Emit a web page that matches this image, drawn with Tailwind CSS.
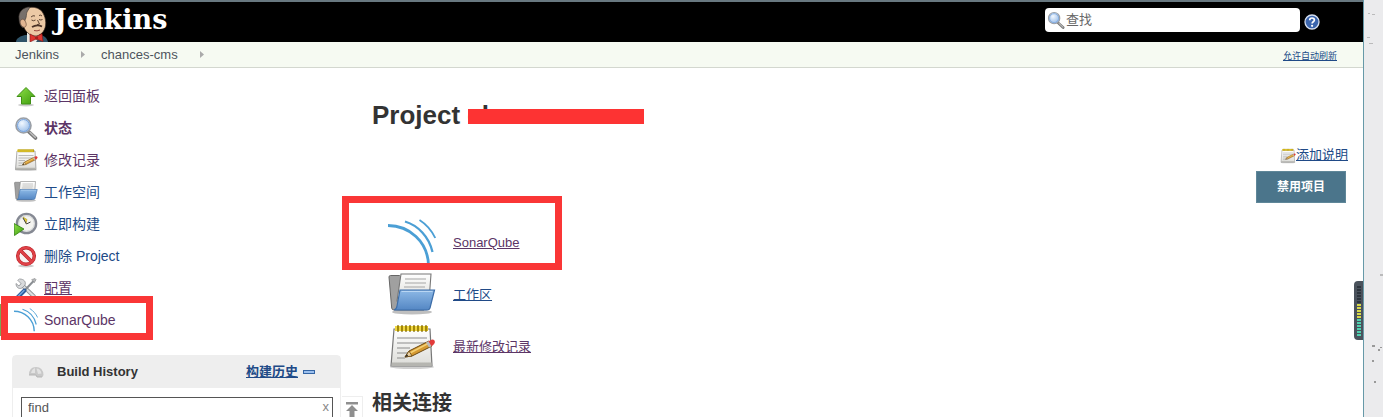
<!DOCTYPE html>
<html lang="zh-CN">

<head>
    <meta charset="UTF-8">
    <meta name="viewport" content="width=device-width, initial-scale=1.0">
    <script src="https://cdn.jsdelivr.net/npm/@tailwindcss/browser@4"></script>
    <title>chances-cms [Jenkins]</title>
</head>

<body class="flex h-screen overflow-hidden bg-white font-['Liberation_Sans','Noto_Sans_CJK_SC',sans-serif] text-[13px] text-[#333]">

    <!-- shared icons -->
    <svg class="absolute size-0" aria-hidden="true">
        <defs>
            <linearGradient id="gBlue" x1="0" y1="0" x2="0" y2="1">
                <stop offset="0" stop-color="#8db9e6" />
                <stop offset="1" stop-color="#5487c4" />
            </linearGradient>
            <linearGradient id="gPaper" x1="0" y1="0" x2="0" y2="1">
                <stop offset="0" stop-color="#ffffff" />
                <stop offset="1" stop-color="#dcdcd8" />
            </linearGradient>
            <linearGradient id="gGreen" x1="0" y1="0" x2="1" y2="1">
                <stop offset="0" stop-color="#8fe04a" />
                <stop offset="1" stop-color="#3d9c0c" />
            </linearGradient>
            <radialGradient id="gLens" cx=".4" cy=".35" r=".7">
                <stop offset="0" stop-color="#f2f8ff" />
                <stop offset="1" stop-color="#8fb6e6" />
            </radialGradient>
        </defs>
        <symbol id="search" viewBox="0 0 24 24">
            <path d="M14.500 15.500l7 6.500" stroke="#777" stroke-width="3.6" stroke-linecap="round" />
            <path d="M16 16.400l5.300 5" stroke="#bbb" stroke-width="1.5" stroke-linecap="round" />
            <circle cx="9.5" cy="9.5" r="7.5" fill="url(#gLens)" stroke="#9a9fa6" stroke-width="1.6" />
            <circle cx="9.5" cy="9.5" r="6" fill="none" stroke="#7aa5dd" stroke-width="1" />
        </symbol>
        <symbol id="notepad" viewBox="0 0 48 48">
            <ellipse cx="24" cy="44" rx="22" ry="2" fill="#000" opacity=".18" />
            <path d="M6 6h36l2 37H3z" fill="url(#gPaper)" stroke="#777" stroke-width="1.2" />
            <path d="M4 39.500h39.500l.3 3.500H3.300z" fill="#b5b5b0" />
            <path d="M9 15h30M9 20h30M9 25h13M9 30h16M9 35h8" stroke="#8b8b8b" stroke-width="1.1" />
            <path d="M7 3h33v5H7z" fill="#d9b91c" />
            <path d="M10 2v7M14 2v7M18 2v7M22 2v7M26 2v7M30 2v7M34 2v7M38 2v7" stroke="#7d6800" stroke-width="1.2" />
            <path d="M8 3v5M12 3v5M16 3v5M20 3v5M24 3v5M28 3v5M32 3v5M36 3v5" stroke="#f5df4a" stroke-width="1.6" />
            <path d="M17 34l4-6 20-10 3 5-20 10z" fill="#d69a32" stroke="#6c4912" stroke-width="1" />
            <path d="M22 30l19-10" stroke="#f3cf74" stroke-width="1.5" />
            <path d="M17 34l4-6 3 5z" fill="#e9cfa0" stroke="#6c4912" stroke-width=".8" />
            <path d="M17 34l2-2.800 1.200 1.800z" fill="#222" />
            <path d="M38 19.500l3-1.500 3 5-3 1.500z" fill="#bbb" />
            <path d="M40.500 18.200l3-1.500q3-.7 3.500 2.300 0 2-3.500 4.300z" fill="#e23a3a" />
        </symbol>
        <symbol id="folder" viewBox="0 0 48 48">
            <ellipse cx="24" cy="41" rx="20" ry="2.5" fill="#000" opacity=".25" />
            <path d="M1 6q0-1.500 1.500-1.500h9L14 7h22v32H6q-2 0-2.300-2z" fill="#a0a0a0" stroke="#666" stroke-width="1" />
            <path d="M13 3h30l-2 27H9z" fill="url(#gPaper)" stroke="#777" stroke-width="1.1" />
            <path d="M17 8h21M17 12h21M16 16h21" stroke="#a5a5a5" stroke-width="1.2" />
            <path d="M12 19h34.500L42 37q-.6 2-3 2H6q2.500-.5 3-4z" fill="url(#gBlue)" stroke="#3c6da8" stroke-width="1.2" />
            <path d="M13.500 20.500h31" stroke="#b9d6f3" stroke-width="1" />
        </symbol>
        <symbol id="sonar" viewBox="0 0 48 48">
            <g fill="none" stroke="#4b9fd5">
                <path d="M0 6.500c21 0 40 16 40.500 40" stroke-width="2.8" />
                <path d="M17 2.500c13 4 24 15 27.500 30.500" stroke-width="2.3" />
                <path d="M31.500 1c7 4.500 12.500 11 15.700 18" stroke-width="1.8" />
            </g>
        </symbol>
    </svg>

    <div class="relative flex min-w-0 flex-1 flex-col border-r border-[#6699a8]">

        <header class="flex h-[42px] shrink-0 items-center border-t-2 border-[#687880] bg-black pr-[43px] pl-4">
            <a href="#" class="flex h-full items-end gap-1.5">
                <svg class="h-9 w-8" viewBox="0 0 32 36" aria-hidden="true">
                    <path d="M0 36c0-4 5-6 9-7h14c5 0 8 3 9 7z" fill="#2f5368" />
                    <path d="M11 26l9-1 4 5-4 6h-9z" fill="#e9e9e4" />
                    <path d="M7 5C12-1 25 0 28 9c3 7 2 14-2 18-4 4-10 4-14 0-4-3-8-12-5-22z" fill="#ecc9a5" stroke="#3b2a20" stroke-width=".7" />
                    <path d="M14 1C7 1 2 6 3 13c0 4 2 8 4 9l2-8c2-3 1-6 2-8z" fill="#77706b" stroke="#3b332e" stroke-width=".6" />
                    <path d="M5 14c2-2 4 0 5 3s-1 5-3 4-4-5-2-7z" fill="#e0b592" stroke="#5a4030" stroke-width=".6" />
                    <path d="M15 11q2-2 4-1M23 9.500q2-1 3 .5M15.500 14q2 1.500 4 0M23 13.500q2 1 3.500 0M21.500 14l2 4-2.500.8" fill="none" stroke="#4d3426" stroke-width=".9" />
                    <path d="M16 21q5-3 10-.5" fill="none" stroke="#4a3228" stroke-width="1.8" />
                    <path d="M18 24.500q3 1 6-.5" fill="none" stroke="#9d4a3e" stroke-width="1" />
                    <path d="M14 28l6 3 6-3.500 1 8-7-2.500-6 3z" fill="#e0352f" stroke="#7a1512" stroke-width=".6" />
                    <circle cx="20.5" cy="32" r="1.7" fill="#a81f1c" />
                </svg>
                <span class="self-center pb-1 font-['DejaVu_Serif',serif] text-[27px] leading-8 font-bold text-white">Jenkins</span>
            </a>
            <form class="ml-auto flex items-center gap-1 pb-1">
                <label class="flex h-6 w-[255px] items-center gap-px rounded-sm bg-white pl-0.5">
                    <svg class="size-[18px]"><use href="#search" /></svg>
                    <input type="search" aria-label="查找" placeholder="查找" class="min-w-0 flex-1 outline-none placeholder:text-[#666]">
                </label>
                <a href="#" aria-label="帮助">
                    <svg class="mt-1 size-4" viewBox="0 0 16 16">
                        <circle cx="8" cy="8" r="7" fill="#3b65ad" stroke="#d5dff0" stroke-width="1.3" />
                        <path d="M5.700 6.300c0-3 4.700-3 4.700-.2 0 1.700-2.300 1.700-2.300 3.500" fill="none" stroke="#fff" stroke-width="1.7" />
                        <circle cx="8.1" cy="11.8" r="1.1" fill="#fff" />
                    </svg>
                </a>
            </form>
        </header>

        <nav class="flex h-[26px] shrink-0 items-center border-b border-[#d3d7cf] bg-[#f6faf2] pr-[26px] pl-[15px] text-[#4d545d]">
            <a href="#">Jenkins</a>
            <svg class="mr-4 ml-[22px] h-[7px] w-1" viewBox="0 0 4 7"><path d="M0 0l4 3.500L0 7z" fill="#aaa" /></svg>
            <a href="#">chances-cms</a>
            <svg class="ml-[22px] h-[7px] w-1" viewBox="0 0 4 7"><path d="M0 0l4 3.500L0 7z" fill="#aaa" /></svg>
            <a href="#" class="mt-1 ml-auto text-[9px] text-[#204a87] underline">允许自动刷新</a>
        </nav>

        <div class="flex">

            <!-- side panel -->
            <aside class="w-[342px] shrink-0 pt-3">
                <ul class="text-sm text-[#5c3566]">
                    <li><a href="#" class="flex h-8 items-center gap-1.5 pl-3.5">
                        <svg class="size-6" viewBox="0 0 24 24">
                            <ellipse cx="12" cy="21" rx="8" ry="1.5" fill="#000" opacity=".2" />
                            <path d="M12 3.500l9 9h-4.500V20h-9v-7.500H3z" fill="url(#gGreen)" stroke="#3f8f14" stroke-width="1" stroke-linejoin="round" />
                        </svg>返回面板</a></li>
                    <li><a href="#" class="flex h-8 items-center gap-1.5 pl-3.5 font-bold">
                        <svg class="size-6"><use href="#search" /></svg>状态</a></li>
                    <li><a href="#" class="flex h-8 items-center gap-1.5 pl-3.5">
                        <svg class="size-6"><use href="#notepad" /></svg>修改记录</a></li>
                    <li><a href="#" class="flex h-8 items-center gap-1.5 pl-3.5 text-[#204a87]">
                        <svg class="size-6"><use href="#folder" /></svg>工作空间</a></li>
                    <li><a href="#" class="flex h-8 items-center gap-1.5 pl-3.5 text-[#204a87]">
                        <svg class="size-6" viewBox="0 0 24 24">
                            <circle cx="12.5" cy="11.5" r="9.6" fill="#f4f4f0" stroke="#858993" stroke-width="2.4" />
                            <circle cx="12.5" cy="11.5" r="7.8" fill="none" stroke="#c3c7cc" stroke-width=".7" />
                            <path d="M9 5l4 2.500-1 4z" fill="#e5cf35" stroke="#a08c10" stroke-width=".5" />
                            <path d="M12.500 12l-3.500-6M12.500 12l4-2" stroke="#444" stroke-width="1" />
                            <path d="M0 11.500l10 5.500L.5 23.500z" fill="url(#gGreen)" stroke="#2f7d10" stroke-width=".8" />
                        </svg>立即构建</a></li>
                    <li><a href="#" class="flex h-8 items-center gap-1.5 pl-3.5 text-[#204a87]">
                        <svg class="size-6" viewBox="0 0 24 24">
                            <ellipse cx="12" cy="22" rx="8" ry="1.5" fill="#000" opacity=".2" />
                            <circle cx="12" cy="12" r="8.3" fill="#f7f3f3" stroke="#b81f24" stroke-width="3.4" />
                            <path d="M6.500 6.500l11 11" stroke="#b81f24" stroke-width="3.4" />
                            <circle cx="12" cy="12" r="8.3" fill="none" stroke="#df4248" stroke-width="2.2" />
                            <path d="M6.500 6.500l11 11" stroke="#df4248" stroke-width="2.2" />
                        </svg>删除 Project</a></li>
                    <li><a href="#" class="flex h-8 items-center gap-1.5 pl-3.5">
                        <svg class="size-6" viewBox="0 0 24 24" fill="none" stroke-linecap="round">
                            <path d="M8 9l12 11.500" stroke="#8f9296" stroke-width="4" />
                            <path d="M8 9l12 11.500" stroke="#dcdedf" stroke-width="2.4" />
                            <path d="M4 4.500l3 3-2 2.500-3-2.500c0 4 3 6 6 4.500l3-3c1.300-3-1-6-5-6z" fill="#d8dadc" stroke="#8f9296" stroke-width=".8" />
                            <path d="M20.500 4L11 14" stroke="#8b8f94" stroke-width="2" />
                            <path d="M18 3.500l3-1 1 1-1.500 3z" fill="#b5b8bb" stroke="#888" stroke-width=".6" />
                            <path d="M10.500 14.500L4 21" stroke="#2e5d9c" stroke-width="4" />
                            <path d="M10 14.500l-6 6" stroke="#76a8dd" stroke-width="1.4" />
                        </svg><span class="underline">配置</span></a></li>
                    <li class="relative border-l-2 border-[#7ea352]"><a href="#" class="flex h-8 items-center gap-1.5 pl-3">
                        <svg class="size-6"><use href="#sonar" /></svg>SonarQube</a>
                        <div class="absolute -top-2 -left-px h-11 w-[152px] border-7 border-[#fa3636]"></div>
                    </li>
                </ul>

                <section class="mt-[19px] mr-px ml-3 rounded-t border border-[#eee]">
                    <div class="flex h-8 items-center bg-[#eee] pr-[25px] pl-[15px] font-bold">
                        <svg class="mr-[13px] size-4" viewBox="0 0 16 16" aria-hidden="true">
                            <path d="M1 11q0-8 7-8t7.500 8l-1 2H9l-1-2z" fill="#c8c8c8" />
                            <path d="M3 9q1-4 4-5v5zM8.500 4.500q4 0 5 5L10 10z" fill="#e2e2e2" />
                            <path d="M1 11h7l1 2h5" fill="none" stroke="#b5b5b5" />
                        </svg>
                        <h2>Build History</h2>
                        <a href="#" class="ml-auto text-[#204a87] underline">构建历史</a>
                        <button type="button" aria-label="collapse" class="ml-[5px] h-1 w-3 border border-[#3465a4] bg-[#9cc0ee]"></button>
                    </div>
                    <div class="relative mt-[9px] mr-[7px] ml-2">
                        <input type="text" value="find" aria-label="find" class="h-6 w-full border border-[#555] px-1.5 pb-1 text-[#555] outline-none">
                        <button type="button" aria-label="clear" class="absolute top-0.5 right-1 leading-4 text-[#888]">x</button>
                    </div>
                </section>
            </aside>

            <!-- scroll-to-top handle -->
            <button type="button" aria-label="top" class="mt-[328px] flex h-8 w-[21px] shrink-0 justify-center border-t border-r border-[#eee] pt-[5px]">
                <svg class="h-[15px] w-3" viewBox="0 0 12 15">
                    <path d="M0 0h12v2.500H0zM6 3l6 6H8.500v6h-5V9H0z" fill="#8f8f8f" />
                </svg>
            </button>

            <main class="min-w-0 flex-1 pt-[31px] pr-[15px] pl-[9px]">
                <h1 class="relative text-[26px] leading-8 font-bold">Project chances-cms
                    <span class="absolute top-2.5 left-24 h-[15px] w-44 bg-[#fd3333]"></span>
                </h1>

                <div class="flex items-start justify-between">
                    <div class="relative pt-[86px]">
                        <ul class="pl-4 text-[#204a87]">
                            <li><a href="#" class="flex h-[52px] items-center gap-[17px] text-[#5c3566] underline">
                                <svg class="size-12"><use href="#sonar" /></svg>SonarQube</a></li>
                            <li><a href="#" class="flex h-[52px] items-center gap-[17px] underline">
                                <svg class="size-12"><use href="#folder" /></svg>工作区</a></li>
                            <li><a href="#" class="flex h-[52px] items-center gap-[17px] text-[#5c3566] underline">
                                <svg class="size-12"><use href="#notepad" /></svg>最新修改记录</a></li>
                        </ul>
                        <div class="absolute top-[65px] -left-[30px] h-[74px] w-[220px] border-7 border-[#fa3636]"></div>
                    </div>

                    <div class="flex flex-col items-end gap-1.5 pt-3.5">
                        <a href="#" class="flex h-5 items-center text-[#204a87] underline">
                            <svg class="mt-0.5 size-4"><use href="#notepad" /></svg>添加说明</a>
                        <button type="button" class="mr-0.5 h-8 w-[90px] border border-[#5f8799] bg-[#4b758b] text-xs font-bold text-white">禁用项目</button>
                    </div>
                </div>

                <h2 class="mt-3.5 text-xl leading-8 font-bold">相关连接</h2>
            </main>
        </div>

        <!-- level meter on the window edge -->
        <div class="absolute top-[281px] right-0 flex h-[59px] w-[9px] flex-col items-center justify-center rounded-l bg-[#4a525c]">
            <svg class="h-[50px] w-1" viewBox="0 0 4 50" fill="none" stroke-width="4" stroke-dasharray="2 1">
                <path d="M2 0v18" stroke="#2d343d" />
                <path d="M2 18v15" stroke="#d8d94a" />
                <path d="M2 33v17" stroke="#4fd0b0" />
            </svg>
        </div>
    </div>

    <!-- desktop behind the window -->
    <div class="w-[19px] shrink-0 bg-[#ebebed]">
        <svg class="h-[417px] w-full" viewBox="0 0 19 417" fill="#999" aria-hidden="true">
            <path d="M4 13h2v1H4zM8 14h3v1H8zM3 37h3v1H3zM5 43h4v1H5zM16 274h3v2h-3z" opacity=".6" />
            <path d="M8 345h3v2H8zM14 349h2v2h-2zM16 347h2v1h-2zM8 360h2v2H8zM10 381h2v2h-2z" />
        </svg>
    </div>

</body>

</html>
